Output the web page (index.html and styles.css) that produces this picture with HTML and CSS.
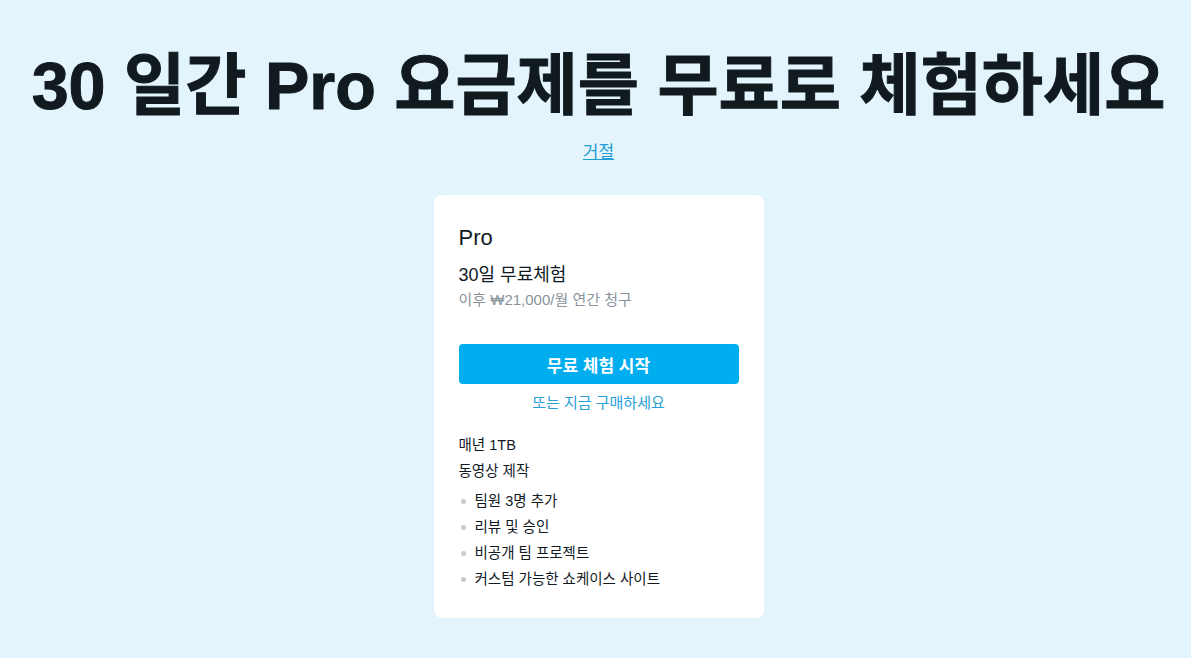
FILE: index.html
```html
<!DOCTYPE html>
<html lang="ko">
<head>
<meta charset="utf-8">
<link rel="stylesheet" href="styles.css">
</head>
<body>
<main class="page">
  <h1 class="title">30 일간 Pro 요금제를 무료로 체험하세요</h1>
  <a class="decline" href="#">거절</a>
  <section class="card">
    <div class="plan">Pro</div>
    <div class="trial">30일 무료체험</div>
    <div class="after">이후 ₩21,000/월 연간 청구</div>
    <button class="cta">무료 체험 시작</button>
    <a class="buy" href="#">또는 지금 구매하세요</a>
    <ul class="features">
      <li class="plain">매년 1TB</li>
      <li class="plain">동영상 제작</li>
      <li class="dot">팀원 3명 추가</li>
      <li class="dot">리뷰 및 승인</li>
      <li class="dot">비공개 팀 프로젝트</li>
      <li class="dot">커스텀 가능한 쇼케이스 사이트</li>
    </ul>
  </section>
</main>
</body>
</html>
```
FILE: styles.css
```css
html, body {
  margin: 0;
  padding: 0;
  background: #e3f4fd;
}
body {
  font-family: "Liberation Sans", Arial, "Noto Sans CJK KR", sans-serif;
  color: #111a1f;
}
.page {
  display: flex;
  flex-direction: column;
  align-items: center;
  padding: 42px 0 0 6px;
}
.title {
  margin: 0;
  font-size: 66.5px;
  font-weight: 700;
  line-height: 88px;
  color: #101a1f;
  -webkit-text-stroke: 1px #101a1f;
  letter-spacing: 0;
  white-space: nowrap;
}
.decline {
  margin-top: 12px;
  font-size: 17px;
  line-height: 22px;
  color: #1f9fd3;
  text-decoration: underline;
}
.card {
  margin-top: 31px;
  width: 330px;
  box-sizing: border-box;
  background: #fff;
  border-radius: 8px;
  padding: 29px 25px 26px;
  display: flex;
  flex-direction: column;
}
.plan {
  font-size: 22px;
  line-height: 28px;
  color: #111a1f;
}
.trial {
  margin-top: 11px;
  font-size: 18px;
  line-height: 24px;
  color: #111a1f;
}
.after {
  margin-top: 3px;
  font-size: 15px;
  line-height: 20px;
  color: #8a949a;
}
.cta {
  margin-top: 34px;
  height: 40px;
  border: none;
  border-radius: 4px;
  background: #00aeef;
  color: #fff;
  font-family: inherit;
  font-size: 17px;
  font-weight: 700;
  cursor: pointer;
}
.buy {
  margin-top: 9px;
  text-align: center;
  font-size: 15px;
  line-height: 20px;
  color: #2a9fd6;
  text-decoration: none;
}
.features {
  list-style: none;
  margin: 19px 0 0;
  padding: 0;
  font-size: 14.5px;
  color: #111a1f;
}
.features li {
  line-height: 26px;
}
.features li.dot {
  display: flex;
  align-items: center;
}
.features li.dot::before {
  content: "";
  width: 5px;
  height: 5px;
  border-radius: 50%;
  background: #c6ccd0;
  margin: 0 9px 0 2px;
}
.features li.plain + li.dot {
  margin-top: 4px;
}
```
